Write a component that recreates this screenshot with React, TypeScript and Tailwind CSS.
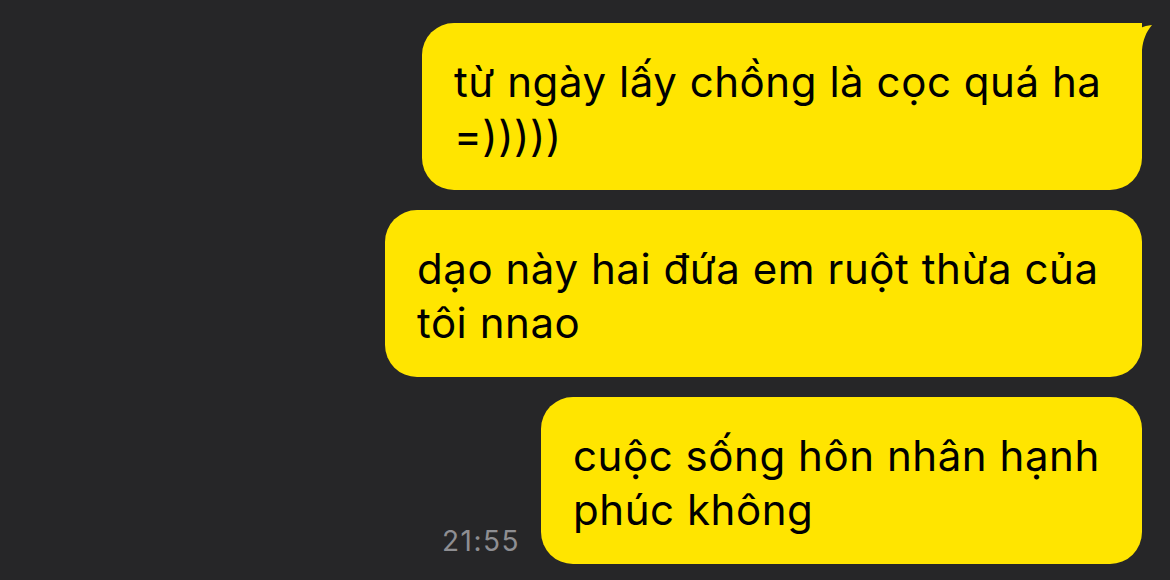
const messages = [
  { id: 1, text: 'từ ngày lấy chồng là cọc quá ha =)))))', width: 'w-[720px]', tail: true },
  { id: 2, text: 'dạo này hai đứa em ruột thừa của tôi nnao', width: 'w-[757px]', tail: false },
  { id: 3, text: 'cuộc sống hôn nhân hạnh phúc không', width: 'w-[601px]', tail: false, time: '21:55' },
];

function Tail() {
  return (
    <svg className="absolute -top-[1px] -right-[10px] w-[44px] h-[40px]" viewBox="0 0 44 40">
      <path
        d="M0 1 C8 1 16 4 23 11 C29 7 35 4 44 3 C38 10 35 18 34 28 L34 40 L0 40 Z"
        fill="#ffe500"
      />
    </svg>
  );
}

export default function App() {
  return (
    <div
      className="w-[1170px] h-[580px] bg-[#262628] overflow-hidden flex flex-col items-end gap-[20px] pt-[23px] pr-[28px]"
      style={{ fontFamily: 'Inter, "Noto Sans", sans-serif' }}
    >
      {messages.map((m) => (
        <div key={m.id} className="flex items-end gap-[21px]">
          {m.time && (
            <span className="text-[28px] text-[#8e8e92] leading-none tracking-[1.5px] pb-[9px]">{m.time}</span>
          )}
          <div
            className={`relative ${m.width} h-[167px] bg-[#ffe500] rounded-[32px] ${m.tail ? 'rounded-tr-none' : ''} pl-[32px] pr-[16px] pt-[32px]`}
          >
            {m.tail && <Tail />}
            <p className="text-[42px] leading-[54px] text-black tracking-[0.55px]">{m.text}</p>
          </div>
        </div>
      ))}
    </div>
  );
}
